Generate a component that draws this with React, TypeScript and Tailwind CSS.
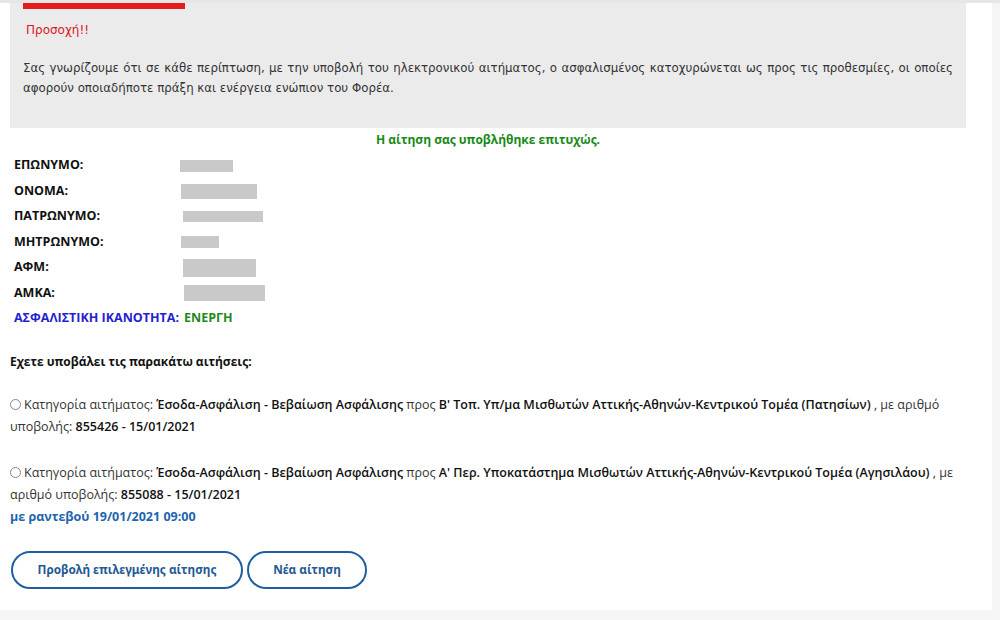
import React from "react";

const fields = [
  { label: "ΕΠΩΝΥΜΟ:", w: "w-[53px]", h: "h-[12px]", ml: "ml-0" },
  { label: "ΟΝΟΜΑ:", w: "w-[76px]", h: "h-[15px]", ml: "ml-[1px]" },
  { label: "ΠΑΤΡΩΝΥΜΟ:", w: "w-[80px]", h: "h-[11px]", ml: "ml-[3px]" },
  { label: "ΜΗΤΡΩΝΥΜΟ:", w: "w-[38px]", h: "h-[12px]", ml: "ml-[1px]" },
  { label: "ΑΦΜ:", w: "w-[73px]", h: "h-[18px]", ml: "ml-[3px]" },
  { label: "ΑΜΚΑ:", w: "w-[81px]", h: "h-[16px]", ml: "ml-[4px]" },
];

const requests = [
  {
    to: "Β' Τοπ. Υπ/μα Μισθωτών Αττικής-Αθηνών-Κεντρικού Τομέα (Πατησίων)",
    tail: ", με αριθμό υποβολής:",
    num: "855426 - 15/01/2021",
    appt: null as string | null,
  },
  {
    to: "Α' Περ. Υποκατάστημα Μισθωτών Αττικής-Αθηνών-Κεντρικού Τομέα (Αγησιλάου)",
    tail: ", με αριθμό υποβολής:",
    num: "855088 - 15/01/2021",
    appt: "με ραντεβού 19/01/2021 09:00",
  },
];

export default function App() {
  return (
    <div className="w-[1000px] h-[620px] bg-[#f5f5f5] overflow-hidden flex flex-col">
      <div className="h-[3px] bg-[#e6e6e6]" />
      <div className="w-[992px] h-[607px] bg-white font-['Open_Sans','Noto_Sans',sans-serif] text-[#222]">
        {/* warning box */}
        <div className="ml-[10px] w-[956px] h-[125px] bg-[#ebebeb] px-[13px] font-['DejaVu_Sans','Verdana',sans-serif]">
          <div className="w-[162px] h-[6px] bg-[#e31c1c]" />
          <div className="mt-[12px] ml-[3px] text-[12px] text-[#d9191c]">Προσοχή!!</div>
          <p className="mt-[19px] text-[11.8px] leading-[20px] text-[#333] text-justify">
            Σας γνωρίζουμε ότι σε κάθε περίπτωση, με την υποβολή του ηλεκτρονικού αιτήματος, ο ασφαλισμένος κατοχυρώνεται ως προς τις προθεσμίες, οι οποίες αφορούν οποιαδήποτε πράξη και ενέργεια ενώπιον του Φορέα.
          </p>
        </div>

        <div className="mt-[3px] ml-[376px] text-[12px] font-bold text-[#188a18]">
          Η αίτηση σας υποβλήθηκε επιτυχώς.
        </div>

        {/* personal data */}
        <div className="mt-[4px] ml-[14px] flex flex-col">
          {fields.map((f) => (
            <div key={f.label} className="h-[25.5px] flex items-center">
              <span className="w-[166px] text-[12.5px] font-bold text-[#111]">{f.label}</span>
              <span className={`${f.w} ${f.h} ${f.ml} bg-[#c9c9c9]`} />
            </div>
          ))}
          <div className="h-[25px] flex items-center text-[12.5px] font-bold">
            <span className="w-[170px] text-[#1f22d0]">ΑΣΦΑΛΙΣΤΙΚΗ ΙΚΑΝΟΤΗΤΑ:</span>
            <span className="text-[#1e8a1e]">ΕΝΕΡΓΗ</span>
          </div>
        </div>

        <div className="mt-[22px] ml-[10px] text-[12px] font-bold text-[#111]">
          Εχετε υποβάλει τις παρακάτω αιτήσεις:
        </div>

        <div className="ml-[10px] w-[950px] flex flex-col gap-[24px] mt-[23px]">
          {requests.map((r) => (
            <div key={r.num} className="text-[12.5px] leading-[22px] text-[#333]">
              <span className="inline-block align-[-1px] w-[11px] h-[11px] rounded-full border border-[#888] bg-white mr-[3px]" />
              Κατηγορία αιτήματος: <span className="font-semibold text-[#111]">Έσοδα-Ασφάλιση - Βεβαίωση Ασφάλισης</span> προς{" "}
              <span className="font-semibold text-[#111]">{r.to}</span> {r.tail}{" "}
              <span className="font-semibold text-[#111]">{r.num}</span>
              {r.appt && <div className="font-bold text-[#1d66ad]">{r.appt}</div>}
            </div>
          ))}
        </div>

        <div className="mt-[23px] ml-[11px] flex gap-[4px] font-['Noto_Sans',sans-serif]">
          <button className="w-[232px] h-[38px] rounded-full border-2 border-[#1f5f9f] text-[11.8px] font-bold text-[#1f5a94]">
            Προβολή επιλεγμένης αίτησης
          </button>
          <button className="w-[120px] h-[38px] rounded-full border-2 border-[#1f5f9f] text-[11.8px] font-bold text-[#1f5a94]">
            Νέα αίτηση
          </button>
        </div>
      </div>
    </div>
  );
}
